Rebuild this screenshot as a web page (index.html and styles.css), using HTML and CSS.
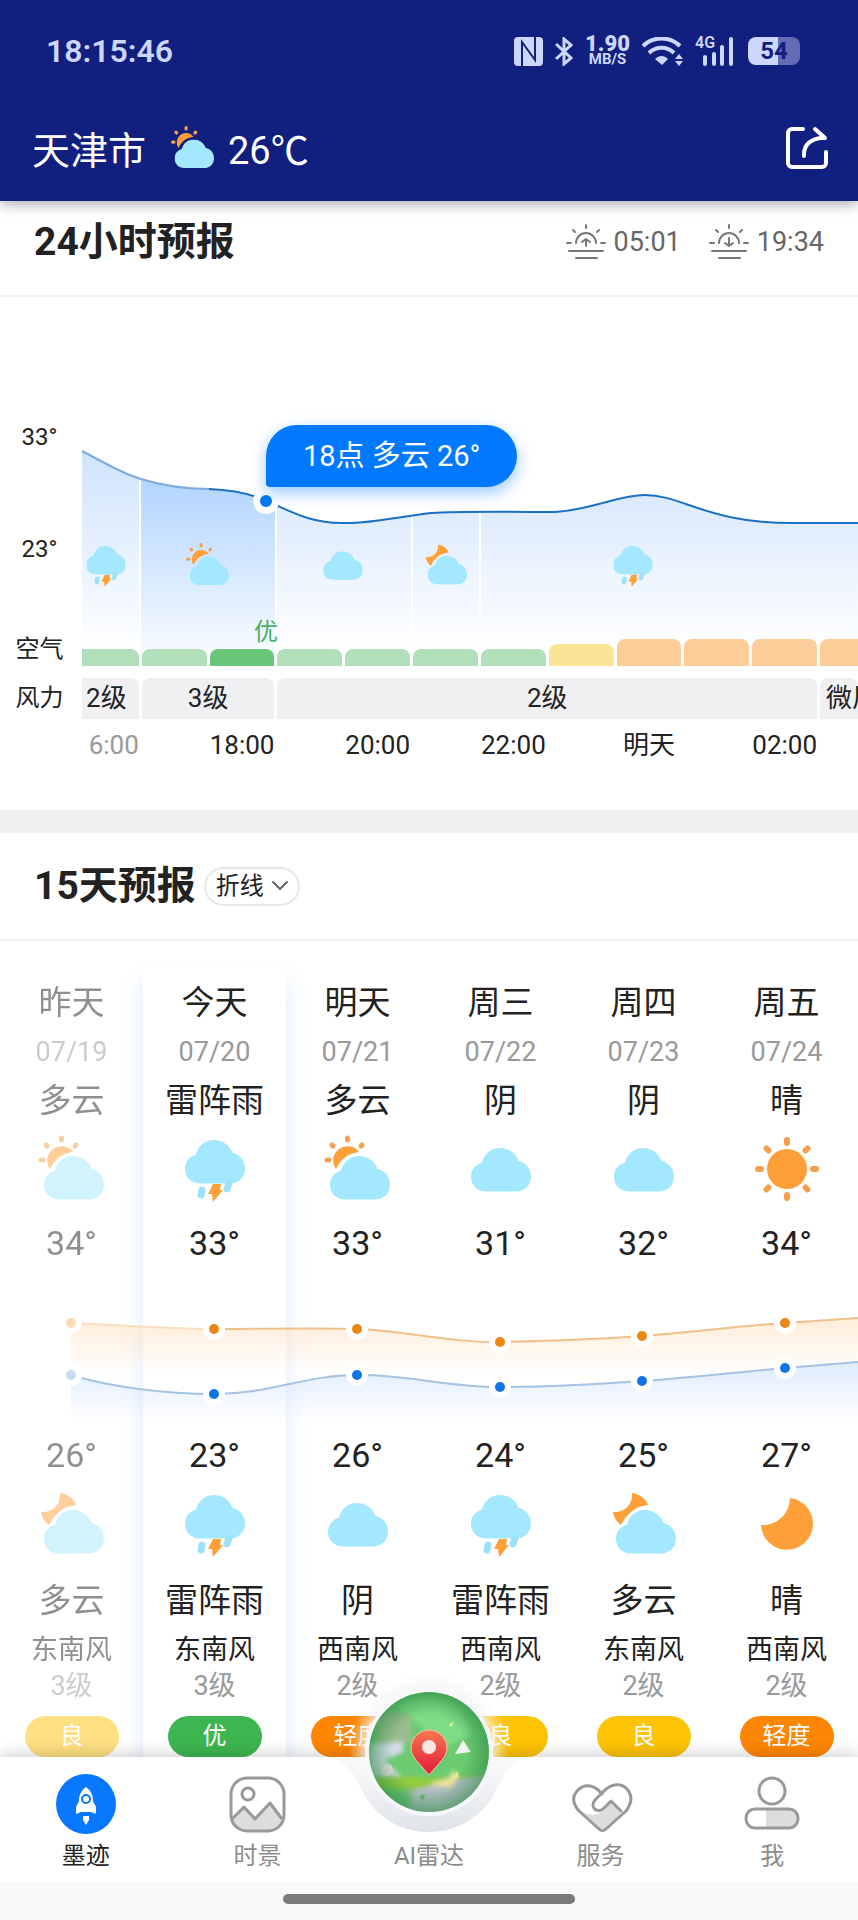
FILE: index.html
```
<!DOCTYPE html>
<html lang="zh-CN">

<head>
  <meta charset="UTF-8">
  <meta name="viewport" content="width=device-width, initial-scale=1">
  <link rel="stylesheet" href="styles.css">
  <title>天津市天气</title>
</head>

<body>

<!-- weather icons -->
<svg class="sprite" aria-hidden="true">
  <symbol id="cloud" viewBox="0 0 60 44">
    <path fill="#a3e8fe" d="M15 43.500C6 43.500 0 37 0 29c0-7 4-12.500 11-14.500C13 6 20 0 29 0s16 5.500 18.500 13C55 14.500 60 21 60 28.500c0 8.500-6 15-15 15z"/>
  </symbol>
  <symbol id="w-overcast" viewBox="0 0 70 70">
    <use href="#cloud" x="5" y="14" width="60" height="44"/>
  </symbol>
  <symbol id="w-storm" viewBox="0 0 70 70">
    <use href="#cloud" x="5" y="6" width="60" height="44"/>
    <path d="M22 56l-1 5M49 49l-2 6" stroke="#9ce2fa" stroke-width="7" stroke-linecap="round"/>
    <path d="M33 50h8l-1 6h3l-10 12-1-8h-4z" fill="#ff9f38"/>
  </symbol>
  <symbol id="w-sun-cloud" viewBox="0 0 70 70">
    <path d="M36 18A14 14 0 0 0 13 35C17 26 25 19 36 18z" fill="#ff9f38"/>
    <path d="M4 26h2M9 11l1 1M24.500 4v2M39 11l-1 1" stroke="#f5a04c" stroke-width="5" stroke-linecap="round"/>
    <use href="#cloud" x="7" y="22" width="60" height="44"/>
  </symbol>
  <symbol id="w-moon-cloud" viewBox="0 0 70 70">
    <path d="M23 4C31 5 37 10 39 16C27 17 18 24 12 36C8 33 5 29 4 23C14 24 24 17 23 4z" fill="#ff9f38"/>
    <use href="#cloud" x="7" y="21" width="60" height="44"/>
  </symbol>
  <symbol id="w-sun" viewBox="0 0 70 70">
    <circle cx="35" cy="35" r="20" fill="#ff9f38"/>
    <path d="M35 6v3M35 61v3M6 35h3M61 35h3M14.500 14.500l2 2M53.500 53.500l2 2M14.500 55.500l2-2M53.500 16.500l2-2" stroke="#f2a04f" stroke-width="6" stroke-linecap="round"/>
  </symbol>
  <symbol id="w-moon" viewBox="0 0 70 70">
    <path d="M38 9A26 26 0 1 1 9 36A27 27 0 0 0 38 9z" fill="#ff9f38"/>
  </symbol>
</svg>

<header class="header">
  <div class="status">
    <span class="clock">18:15:46</span>
    <div class="status-icons">
      <svg width="29" height="29" viewBox="0 0 29 29">
        <rect width="29" height="29" rx="4" fill="#cdd6fd"/>
        <path d="M8 29V5l13 18V0" fill="none" stroke="#111f7f" stroke-width="2"/>
      </svg>
      <svg width="18" height="29" viewBox="0 0 18 29" fill="none" stroke="#cdd6fd" stroke-width="3">
        <path d="M1 7l15 14-7 6V2l7 6L1 22"/>
      </svg>
      <div class="speed"><b>1.90</b><small>MB/S</small></div>
      <svg width="41" height="29" viewBox="0 0 41 29" fill="none" stroke="#cdd6fd" stroke-width="4">
        <path d="M1 9C11-1 28-1 38 9M7 16c7-7 18-7 25 0"/>
        <path d="M13 22c4-4 9-4 13 0l-6 6z" fill="#cdd6fd" stroke="none"/>
        <path d="M33 22l4-5 4 5zM33 24l4 5 4-5z" fill="#cdd6fd" stroke="none"/>
      </svg>
      <div class="signal">
        <span>4G</span>
        <svg width="39" height="29" viewBox="0 0 39 29" stroke="#cdd6fd" stroke-width="4" stroke-linecap="round">
          <path d="M10 20v7M19 17v10M27 10v17M36 2v25"/>
        </svg>
      </div>
      <div class="battery">54</div>
    </div>
  </div>
  <div class="city-bar">
    <span class="city">天津市</span>
    <svg class="city-icon"><use href="#w-sun-cloud"/></svg>
    <span class="city-temp">26℃</span>
    <button class="share" type="button" aria-label="分享">
      <svg width="44" height="44" viewBox="0 0 44 44" fill="none" stroke="#fff" stroke-width="4" stroke-linecap="round" stroke-linejoin="round">
        <path d="M18 3H7a4 4 0 0 0-4 4v30a4 4 0 0 0 4 4h30a4 4 0 0 0 4-4V26"/>
        <path d="M19 30C18 18 28 11 40 12L30 3"/>
      </svg>
    </button>
  </div>
</header>

<main>
  <section class="hourly">
    <div class="hourly-head">
      <h2>24小时预报</h2>
      <div class="sun-times">
        <span class="sun-time">
          <svg width="40" height="36" viewBox="0 0 40 36" fill="none" stroke="#777" stroke-width="2" stroke-linecap="round">
            <path d="M10 19a10 10 0 0 1 20 0M20 1v3M7 6l2 2M33 6l-2 2M1 19h4M35 19h4M3 27h34M10 34h21M20 22v-7M16 18l4-3 4 3"/>
          </svg>
          05:01
        </span>
        <span class="sun-time">
          <svg width="40" height="36" viewBox="0 0 40 36" fill="none" stroke="#777" stroke-width="2" stroke-linecap="round">
            <path d="M10 19a10 10 0 0 1 20 0M20 1v3M7 6l2 2M33 6l-2 2M1 19h4M35 19h4M3 27h34M10 34h21M20 14v8M16 19l4 3 4-3"/>
          </svg>
          19:34
        </span>
      </div>
    </div>

    <div class="hourly-chart">
      <div class="scale">
        <span>33°</span>
        <span>23°</span>
        <span>空气</span>
      </div>
      <div class="plot">
        <svg class="curve" viewBox="0 0 776 241">
          <defs>
            <linearGradient id="fill" gradientUnits="userSpaceOnUse" x1="0" y1="26" x2="0" y2="225">
              <stop offset="0" stop-color="#cfe3fd"/>
              <stop offset="1" stop-color="#fff"/>
            </linearGradient>
            <linearGradient id="fill-now" gradientUnits="userSpaceOnUse" x1="0" y1="50" x2="0" y2="230">
              <stop offset="0" stop-color="#b0d3ff"/>
              <stop offset="1" stop-color="#f8fbff"/>
            </linearGradient>
            <clipPath id="area">
              <path d="M0 26C30 42 45 50 59 54C85 62 110 64 127 64C150 65 170 69 184 76C205 84 225 98 260 98C290 99 325 90 350 88S440 87 473 87C515 84 535 70 563 70C600 70 625 98 710 98H776V241H0z"/>
            </clipPath>
          </defs>
          <g clip-path="url(#area)">
            <rect width="776" height="241" fill="url(#fill)"/>
            <rect x="59" width="135" height="241" fill="url(#fill-now)"/>
            <path d="M58 0v241M194 0v241M330 0v241M398 0v241" stroke="#fff" stroke-width="2"/>
          </g>
          <g fill="none" stroke-width="2">
            <path stroke="#7eabdb" d="M0 26C30 42 45 50 59 54C85 62 110 64 127 64"/>
            <path stroke="#1a70c4" d="M127 64C150 65 170 69 184 76C205 84 225 98 260 98C290 99 325 90 350 88S440 87 473 87C515 84 535 70 563 70C600 70 625 98 710 98H776"/>
          </g>
          <circle cx="184" cy="76" r="13" fill="#fff"/>
          <circle cx="184" cy="76" r="6" fill="#0878ef"/>
          <use href="#w-storm" x="1" y="117" width="46" height="46"/>
          <use href="#w-sun-cloud" x="103" y="117" width="46" height="46"/>
          <use href="#w-overcast" x="238" y="117" width="46" height="46"/>
          <use href="#w-moon-cloud" x="341" y="117" width="46" height="46"/>
          <use href="#w-storm" x="528" y="117" width="46" height="46"/>
          <text class="air-now" x="184" y="215" text-anchor="middle">优</text>
        </svg>
        <div class="tip">18点 多云 26°</div>
        <div class="hours air">
          <i></i><i></i><i class="now"></i><i></i><i></i><i></i><i></i>
          <i class="fair"></i><i class="light"></i><i class="light"></i><i class="light"></i><i class="light"></i>
        </div>
      </div>

      <span class="wind-label">风力</span>
      <div class="hours wind">
        <span>2级</span>
        <span class="span-2">3级</span>
        <span class="span-8">2级</span>
        <span class="cut">微风</span>
      </div>

      <div class="hours times">
        <span class="past">6:00</span>
        <span></span><span>18:00</span>
        <span></span><span>20:00</span>
        <span></span><span>22:00</span>
        <span></span><span>明天</span>
        <span></span><span>02:00</span>
      </div>
    </div>
  </section>

  <section class="daily">
    <div class="daily-head">
      <h2>15天预报</h2>
      <div class="mode">
        <select aria-label="显示方式">
          <option>折线</option>
          <option>列表</option>
        </select>
        <svg width="18" height="12" viewBox="0 0 18 12" fill="none" stroke="#666" stroke-width="2" stroke-linecap="round" stroke-linejoin="round">
          <path d="M2 2l7 7 7-7"/>
        </svg>
      </div>
    </div>

    <div class="days">
      <div class="today-bg"></div>

      <div class="day first past">
        <span class="name">昨天</span>
        <span class="date">07/19</span>
        <span class="cond">多云</span>
        <svg class="icon"><use href="#w-sun-cloud"/></svg>
        <span class="temp">34°</span>
      </div>
      <div class="day">
        <span class="name">今天</span>
        <span class="date">07/20</span>
        <span class="cond">雷阵雨</span>
        <svg class="icon"><use href="#w-storm"/></svg>
        <span class="temp">33°</span>
      </div>
      <div class="day">
        <span class="name">明天</span>
        <span class="date">07/21</span>
        <span class="cond">多云</span>
        <svg class="icon"><use href="#w-sun-cloud"/></svg>
        <span class="temp">33°</span>
      </div>
      <div class="day">
        <span class="name">周三</span>
        <span class="date">07/22</span>
        <span class="cond">阴</span>
        <svg class="icon"><use href="#w-overcast"/></svg>
        <span class="temp">31°</span>
      </div>
      <div class="day">
        <span class="name">周四</span>
        <span class="date">07/23</span>
        <span class="cond">阴</span>
        <svg class="icon"><use href="#w-overcast"/></svg>
        <span class="temp">32°</span>
      </div>
      <div class="day">
        <span class="name">周五</span>
        <span class="date">07/24</span>
        <span class="cond">晴</span>
        <svg class="icon"><use href="#w-sun"/></svg>
        <span class="temp">34°</span>
      </div>

      <svg class="lines" viewBox="0 0 858 168">
        <defs>
          <linearGradient id="warm" gradientUnits="userSpaceOnUse" x1="0" y1="58" x2="0" y2="108">
            <stop offset="0" stop-color="#ffdcb5" stop-opacity=".5"/>
            <stop offset="1" stop-color="#ffdcb5" stop-opacity="0"/>
          </linearGradient>
          <linearGradient id="cool" gradientUnits="userSpaceOnUse" x1="0" y1="103" x2="0" y2="156">
            <stop offset="0" stop-color="#c3dcfd" stop-opacity=".5"/>
            <stop offset="1" stop-color="#c3dcfd" stop-opacity="0"/>
          </linearGradient>
        </defs>
        <path fill="url(#warm)" d="M71 58C120 60 165 64 214 64S310 63 357 64C400 65 450 78 500 77S600 74 642 71S750 60 785 58L858 53V110H71z"/>
        <path fill="url(#cool)" d="M71 110C110 122 165 129 214 129C270 129 305 110 357 110C405 109 445 122 500 122S600 119 642 116S750 106 785 103L858 97V165H71z"/>
        <g fill="none" stroke-width="2">
          <path stroke="#f9dfc0" d="M71 58C120 60 165 64 214 64"/>
          <path stroke="#efc08a" d="M214 64C262 64 310 63 357 64C400 65 450 78 500 77S600 74 642 71S750 60 785 58L858 53"/>
          <path stroke="#a5c3e3" d="M71 110C110 122 165 129 214 129C270 129 305 110 357 110C405 109 445 122 500 122S600 119 642 116S750 106 785 103L858 97"/>
        </g>
        <g fill="#ec8613" stroke="#fff" stroke-width="12" paint-order="stroke">
          <circle cx="71" cy="58" r="5" fill="#fbdcb8"/>
          <circle cx="214" cy="64" r="5"/>
          <circle cx="357" cy="64" r="5"/>
          <circle cx="500" cy="77" r="5"/>
          <circle cx="642" cy="71" r="5"/>
          <circle cx="785" cy="58" r="5"/>
        </g>
        <g fill="#1275e6" stroke="#fff" stroke-width="12" paint-order="stroke">
          <circle cx="71" cy="110" r="5" fill="#c6daf2"/>
          <circle cx="214" cy="129" r="5"/>
          <circle cx="357" cy="110" r="5"/>
          <circle cx="500" cy="122" r="5"/>
          <circle cx="642" cy="116" r="5"/>
          <circle cx="785" cy="103" r="5"/>
        </g>
      </svg>

      <div class="night first past">
        <span class="temp">26°</span>
        <svg class="icon"><use href="#w-moon-cloud"/></svg>
        <span class="cond">多云</span>
        <span class="dir">东南风</span>
        <span class="level">3级</span>
        <span class="aqi">良</span>
      </div>
      <div class="night">
        <span class="temp">23°</span>
        <svg class="icon"><use href="#w-storm"/></svg>
        <span class="cond">雷阵雨</span>
        <span class="dir">东南风</span>
        <span class="level">3级</span>
        <span class="aqi good">优</span>
      </div>
      <div class="night">
        <span class="temp">26°</span>
        <svg class="icon"><use href="#w-overcast"/></svg>
        <span class="cond">阴</span>
        <span class="dir">西南风</span>
        <span class="level">2级</span>
        <span class="aqi bad">轻度</span>
      </div>
      <div class="night">
        <span class="temp">24°</span>
        <svg class="icon"><use href="#w-storm"/></svg>
        <span class="cond">雷阵雨</span>
        <span class="dir">西南风</span>
        <span class="level">2级</span>
        <span class="aqi">良</span>
      </div>
      <div class="night">
        <span class="temp">25°</span>
        <svg class="icon"><use href="#w-moon-cloud"/></svg>
        <span class="cond">多云</span>
        <span class="dir">东南风</span>
        <span class="level">2级</span>
        <span class="aqi">良</span>
      </div>
      <div class="night">
        <span class="temp">27°</span>
        <svg class="icon"><use href="#w-moon"/></svg>
        <span class="cond">晴</span>
        <span class="dir">西南风</span>
        <span class="level">2级</span>
        <span class="aqi bad">轻度</span>
      </div>
    </div>
  </section>
</main>

<footer class="footer">
  <nav class="tabs">
    <a class="tab active" href="#">
      <svg width="64" height="64" viewBox="0 0 64 64">
        <circle cx="32" cy="33" r="30" fill="#0878ff"/>
        <path d="M32 16c-5 4-7 8-7 14l-3 6v7l5-2h10l5 2v-7l-3-6c0-6-2-10-7-14z" fill="#fff"/>
        <circle cx="32" cy="28" r="4" fill="#fff" stroke="#0878ff" stroke-width="2"/>
        <path d="M29 45h6v4l-3 5-3-5z" fill="#fff"/>
      </svg>
      墨迹
    </a>
    <a class="tab" href="#">
      <svg width="64" height="64" viewBox="0 0 64 64" fill="none" stroke="#999" stroke-width="3" stroke-linejoin="round">
        <path d="M7 50l12-13 11 12 15-17 12 16c0 8-6 12-14 12H21C13 60 8 56 7 50z" fill="#ddd" stroke="none"/>
        <rect x="6" y="7" width="53" height="53" rx="16"/>
        <circle cx="23" cy="23" r="6"/>
        <path d="M7 48l12-12 11 12 15-16 12 16"/>
      </svg>
      时景
    </a>
    <a class="tab radar" href="#">
      <svg class="radar-bump" width="240" height="170" viewBox="0 0 240 170">
        <defs>
          <linearGradient id="bump" x1="0" y1="0" x2="0" y2="1">
            <stop offset="0" stop-color="#fbfbfc"/>
            <stop offset="1" stop-color="#dfe3e9"/>
          </linearGradient>
          <radialGradient id="halo">
            <stop offset=".7" stop-color="#fff" stop-opacity=".9"/>
            <stop offset=".8" stop-color="#f4f4f5" stop-opacity=".7"/>
            <stop offset="1" stop-color="#f4f4f5" stop-opacity="0"/>
          </radialGradient>
          <radialGradient id="shade">
            <stop offset=".6" stop-color="#2d8a46" stop-opacity="0"/>
            <stop offset="1" stop-color="#2d8a46" stop-opacity=".6"/>
          </radialGradient>
          <linearGradient id="pin" x1="0" y1="0" x2="0" y2="1">
            <stop offset="0" stop-color="#f5794e"/>
            <stop offset="1" stop-color="#e3173d"/>
          </linearGradient>
          <filter id="soft" x="-20%" y="-20%" width="140%" height="140%"><feGaussianBlur stdDeviation="2"/></filter>
          <clipPath id="globe"><circle cx="120" cy="80" r="60"/></clipPath>
        </defs>
        <circle cx="120" cy="80" r="80" fill="url(#halo)"/>
        <path fill="url(#bump)" d="M18 85C36 87 44 100 52 116C66 146 92 160 120 160S174 146 188 116C196 100 204 87 222 85z"/>
        <circle cx="120" cy="80" r="64" fill="#f7f8fb"/>
        <g clip-path="url(#globe)">
          <rect x="60" y="20" width="120" height="120" fill="#6ccb70"/>
          <g filter="url(#soft)">
            <path d="M68 40h34v32H66z" fill="#9cbd8f"/>
            <path d="M60 72l34-2v10l-18 8 18 18-10 8-24-12z" fill="#d3dbe6"/>
            <path d="M88 34c20-12 46-10 62 4l14 24-30 14-20-20z" fill="#7fdc86"/>
            <path d="M60 106c30-8 60 8 120-6v10l-60 8-60-2z" fill="#94cc3f"/>
            <path d="M98 120l42-11 40-6v40H90z" fill="#bcc1cc"/>
            <path d="M120 112l20-6 4-8 6 6-8 12z" fill="#efe39a"/>
            <path d="M84 126l8-8 12 6-6 12z" fill="#6fc47c"/>
          </g>
          <path d="M146 82l8-14 8 12z" fill="#f2f7f5"/>
          <path d="M139 54l6-5-2 5zM144 108l4-9 2 6z" fill="#e9ef8a"/>
          <circle cx="78" cy="98" r="6" fill="#eadfe0"/>
          <path d="M110 124l6-2-2 7z" fill="#62c26b"/>
          <circle cx="120" cy="80" r="60" fill="url(#shade)"/>
        </g>
        <path d="M120 103C110 91 102 85 102 76a18 18 0 0 1 36 0c0 9-8 15-18 27z" fill="url(#pin)" stroke="#f9c9a8" stroke-width="1"/>
        <circle cx="120" cy="75" r="7" fill="#fde9e4"/>
      </svg>
      AI雷达
    </a>
    <a class="tab" href="#">
      <svg width="64" height="64" viewBox="0 0 64 64" fill="none" stroke="#999" stroke-width="3" stroke-linejoin="round" stroke-linecap="round">
        <path d="M14 42l10 2c6 0 8-4 18-12l10 10-16 17c-2 1-3 1-5-1z" fill="#ddd" stroke="none"/>
        <path d="M33 23c-7-9-17-11-24-4s-5 14 1 21l20 18c2 2 5 2 7 0l20-18c6-8 7-15 1-22s-16-5-23 2L26 29c-6 8 3 14 9 8l7-7 10 10"/>
      </svg>
      服务
    </a>
    <a class="tab" href="#">
      <svg width="64" height="64" viewBox="0 0 64 64" fill="none" stroke="#999" stroke-width="3">
        <path d="M26 38h23a9 9 0 0 1 0 19H26z" fill="#ddd" stroke="none"/>
        <circle cx="32" cy="20" r="13"/>
        <rect x="6" y="38" width="52" height="19" rx="9"/>
      </svg>
      我
    </a>
  </nav>
  <div class="home-bar"></div>
</footer>

</body>
</html>
```

FILE: styles.css
```
* {
    box-sizing: border-box;
}

body {
    font-family: Roboto, "Noto Sans CJK SC", sans-serif;
    background-color: #fff;
    color: #222;
    margin: 0;
}

h2 {
    font-size: 39px;
    line-height: 48px;
    font-weight: bold;
    margin: 0;
}

.sprite {
    position: absolute;
    width: 0;
    height: 0;
}

/* header */

.header {
    position: sticky;
    top: 0;
    z-index: 10;
    background-color: #111f7f;
    color: #fff;
    box-shadow: 0 4px 12px rgba(0, 0, 0, 0.3);
}

.status {
    display: flex;
    justify-content: space-between;
    align-items: center;
    height: 102px;
    padding: 0 58px 0 46px;
    color: #cdd6fd;
}

.clock {
    font-size: 32px;
    font-weight: 600;
}

.status-icons {
    display: flex;
    align-items: center;
    gap: 12px;
}

.speed {
    display: flex;
    flex-direction: column;
    align-items: center;
    font-weight: bold;
    font-size: 22px;
    line-height: 16px;
}

.speed small {
    font-size: 15px;
    line-height: 14px;
}

.signal {
    position: relative;
    height: 29px;
}

.signal span {
    position: absolute;
    top: 0;
    left: 0;
    font-size: 16px;
    line-height: 12px;
    font-weight: 600;
}

.battery {
    width: 52px;
    height: 28px;
    margin-left: 2px;
    border-radius: 8px;
    background: linear-gradient(90deg, #cdd6fd 57%, #626bb4 57%);
    color: #111f7f;
    font-size: 24px;
    line-height: 28px;
    font-weight: bold;
    text-align: center;
}

.city-bar {
    display: flex;
    align-items: center;
    height: 99px;
    padding: 0 29px 8px 32px;
    font-size: 38px;
}

.city-icon {
    width: 46px;
    height: 46px;
    margin: 0 12px 0 24px;
}

.share {
    display: flex;
    margin-left: auto;
    padding: 0;
    border: none;
    background: none;
    cursor: pointer;
}

/* 24 hours */

.hourly {
    border-bottom: 23px solid #f0f0f0;
}

.hourly-head {
    display: flex;
    justify-content: space-between;
    align-items: center;
    padding: 17px 34px 29px;
    border-bottom: 2px solid #f0f0f0;
}

.sun-times {
    display: flex;
    gap: 28px;
}

.sun-time {
    display: flex;
    align-items: center;
    gap: 8px;
    font-size: 27px;
    color: #666;
}

.hourly-chart {
    display: grid;
    grid-template-columns: 82px 1fr;
    padding: 128px 0 50px;
    overflow: hidden;
}

.scale {
    display: grid;
    grid-template-rows: 112px 100px 24px;
    padding-right: 3px;
    font-size: 24px;
    line-height: 24px;
    text-align: center;
}

.plot {
    position: relative;
    display: grid;
}

.curve,
.air {
    grid-area: 1 / 1;
    width: 100%;
}

.air-now {
    font-size: 24px;
    fill: #4caf61;
}

.tip {
    position: absolute;
    top: 0;
    left: calc(100% * 184 / 776);
    padding: 0 37px;
    border-radius: 31px 31px 31px 4px;
    background-color: #0078ff;
    box-shadow: 0 6px 16px rgba(0, 120, 255, 0.4);
    color: #fff;
    font-size: 29px;
    line-height: 62px;
    white-space: nowrap;
}

.hours {
    display: grid;
    grid-template-columns: 57fr repeat(10, 65fr) 38fr;
    column-gap: 3px;
}

.air {
    align-self: end;
    align-items: end;
}

.air i {
    height: 17px;
    border-radius: 8px 8px 0 0;
    background-color: #b2e0bb;
}

.air i:first-child {
    border-top-left-radius: 0;
}

.air i:last-child {
    border-top-right-radius: 0;
}

.air .now {
    background-color: #69c678;
}

.air .fair {
    height: 22px;
    background-color: #fae596;
}

.air .light {
    height: 27px;
    background-color: #fdcd99;
}

.wind-label {
    margin-top: 12px;
    padding-right: 3px;
    font-size: 24px;
    line-height: 41px;
    text-align: center;
}

.wind {
    margin-top: 12px;
}

.wind span {
    min-width: 0;
    border-radius: 8px 8px 0 0;
    background-color: #f0f0f3;
    font-size: 26px;
    line-height: 41px;
    text-align: center;
    white-space: nowrap;
}

.wind span:first-child {
    border-top-left-radius: 0;
    padding-right: 8px;
}

.wind .span-2 {
    grid-column: span 2;
}

.wind .span-8 {
    grid-column: span 8;
}

.wind .cut {
    padding-left: 6px;
    text-align: left;
}

.times {
    grid-column: 2;
    margin-top: 11px;
    font-size: 26px;
    line-height: 30px;
    text-align: center;
}

.times span {
    min-width: 0;
    white-space: nowrap;
}

.times .past {
    color: #999;
    text-align: right;
}

/* 15 days */

.daily-head {
    display: flex;
    align-items: center;
    gap: 8px;
    padding: 29px 34px;
    border-bottom: 2px solid #f0f0f0;
}

.mode {
    display: flex;
    align-items: center;
    position: relative;
}

.mode select {
    appearance: none;
    width: 96px;
    height: 39px;
    padding: 0 10px;
    border: 2px solid #e8e8e8;
    border-radius: 20px;
    background-color: #fff;
    color: #222;
    font-family: inherit;
    font-size: 24px;
    line-height: 32px;
}

.mode svg {
    position: absolute;
    right: 11px;
    pointer-events: none;
}

.days {
    display: grid;
    grid-template-columns: repeat(6, 1fr);
    overflow: hidden;
}

.today-bg {
    grid-column: 2;
    grid-row: 1 / 4;
    margin-top: 24px;
    box-shadow: 0 16px 20px rgba(90, 155, 240, 0.2);
    background-color: #fff;
}

.day,
.night {
    display: flex;
    flex-direction: column;
    align-items: center;
    white-space: nowrap;
}

.day {
    grid-row: 1;
    padding-top: 38px;
}

.night {
    grid-row: 3;
}

.days .first {
    grid-column: 1;
}

/* shares its cells with .today-bg */
.first + .day,
.first + .night {
    grid-column: 2;
}

.lines {
    grid-row: 2;
    grid-column: 1 / -1;
    width: 100%;
}

.name,
.cond {
    font-size: 33px;
    line-height: 48px;
}

.date {
    font-size: 27px;
    line-height: 50px;
    color: #999;
}

.icon {
    width: 70px;
    height: 70px;
    margin: 9px 0 17px;
}

.temp {
    font-size: 34px;
    line-height: 44px;
}

.night .icon {
    margin: 12px 0 18px;
}

.dir {
    margin-top: 7px;
    font-size: 27px;
    line-height: 36px;
}

.level {
    font-size: 27px;
    line-height: 36px;
    color: #999;
}

.aqi {
    width: 94px;
    margin-top: 12px;
    border-radius: 21px;
    background-color: #fdc305;
    color: #fff;
    font-size: 24px;
    line-height: 41px;
    text-align: center;
}

.aqi.good {
    background-color: #3eb650;
}

.aqi.bad {
    background-color: #ff8604;
}

.days .past {
    opacity: 0.5;
}

/* bottom tabs */

.footer {
    position: sticky;
    bottom: 0;
    background-color: #fff;
    box-shadow: 0 -2px 16px rgba(0, 0, 0, 0.2);
}

.tabs {
    display: grid;
    grid-template-columns: repeat(5, 1fr);
    height: 125px;
}

.tab {
    position: relative;
    display: flex;
    flex-direction: column;
    align-items: center;
    justify-content: flex-end;
    padding-bottom: 8px;
    color: #8c8c8c;
    font-size: 24px;
    line-height: 36px;
    text-decoration: none;
}

.tab svg {
    margin-bottom: 3px;
}

.tab.active {
    color: #222;
}

.tab .radar-bump {
    position: absolute;
    top: -85px;
    left: 50%;
    margin-left: -120px;
}

.home-bar {
    height: 39px;
    padding-top: 12px;
    background-color: #f9f9f9;
}

.home-bar::before {
    content: "";
    display: block;
    width: 34%;
    height: 10px;
    margin: 0 auto;
    border-radius: 5px;
    background-color: #7b7b7b;
}
```
